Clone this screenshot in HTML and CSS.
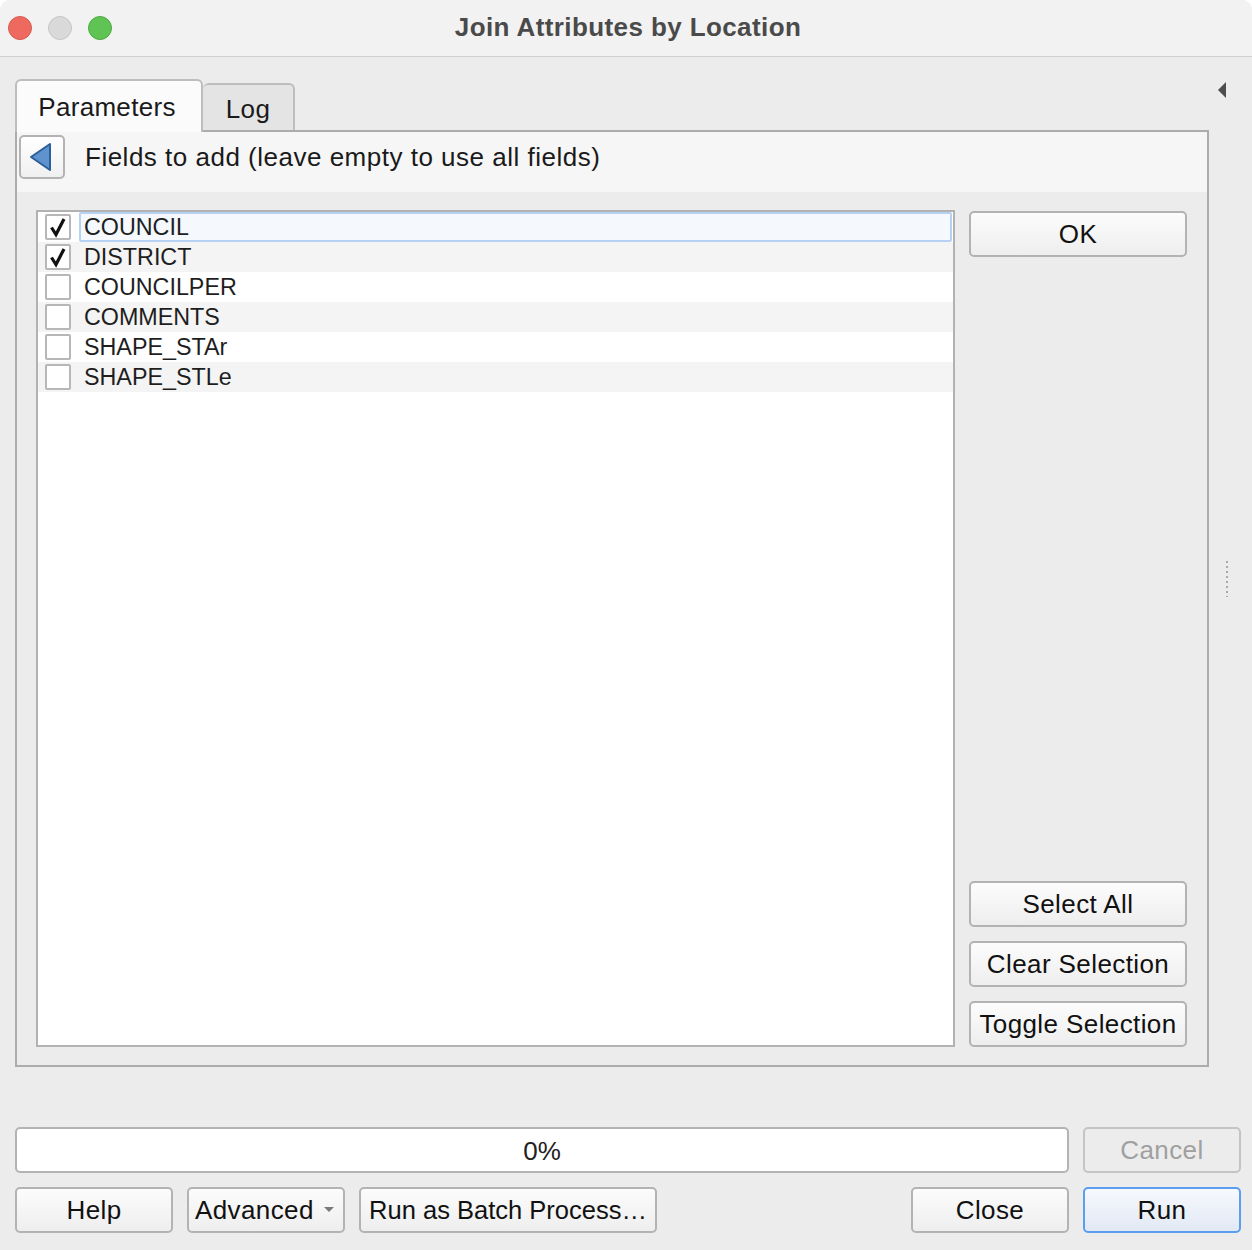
FILE: index.html
```html
<!DOCTYPE html>
<html>
<head>
<meta charset="utf-8">
<link rel="stylesheet" href="styles.css">
</head>
<body>
<div class="window">
  <div class="titlebar">
    <div class="lights">
      <span class="light red"></span>
      <span class="light gray"></span>
      <span class="light green"></span>
    </div>
    <div class="title">Join Attributes by Location</div>
    <div></div>
  </div>
  <div class="content">
    <div class="main">
      <div class="tabs-col">
        <div class="tabbar">
          <div class="tab active">Parameters</div>
          <div class="tab">Log</div>
        </div>
        <div class="panel">
          <div class="panel-head">
            <div class="back">
              <svg width="26" height="30" viewBox="0 0 26 30"><path d="M22 2 L22 28 L3 15 Z" fill="#5f93cf" stroke="#2d5f99" stroke-width="2" stroke-linejoin="round"/></svg>
            </div>
            <span class="head-text">Fields to add (leave empty to use all fields)</span>
          </div>
          <div class="panel-body">
            <div class="list">
              <div class="row">
                <span class="cb"><svg width="22" height="22" viewBox="0 0 22 22"><path d="M4.5 11.5 L9 18.5 L17 3" fill="none" stroke="#111" stroke-width="3.2" stroke-linejoin="miter"/></svg></span>
                <span class="label focus">COUNCIL</span>
              </div>
              <div class="row alt">
                <span class="cb"><svg width="22" height="22" viewBox="0 0 22 22"><path d="M4.5 11.5 L9 18.5 L17 3" fill="none" stroke="#111" stroke-width="3.2" stroke-linejoin="miter"/></svg></span>
                <span class="label">DISTRICT</span>
              </div>
              <div class="row">
                <span class="cb"></span>
                <span class="label">COUNCILPER</span>
              </div>
              <div class="row alt">
                <span class="cb"></span>
                <span class="label">COMMENTS</span>
              </div>
              <div class="row">
                <span class="cb"></span>
                <span class="label">SHAPE_STAr</span>
              </div>
              <div class="row alt">
                <span class="cb"></span>
                <span class="label">SHAPE_STLe</span>
              </div>
            </div>
            <div class="side-buttons">
              <div class="btn ok">OK</div>
              <div class="spacer"></div>
              <div class="btn">Select All</div>
              <div class="btn">Clear Selection</div>
              <div class="btn">Toggle Selection</div>
            </div>
          </div>
        </div>
      </div>
      <div class="sidebar">
        <svg class="collapse" width="10" height="18" viewBox="0 0 10 18"><path d="M9 1 L9 17 L1 9 Z" fill="#4d4d4d"/></svg>
        <div class="grip"></div>
      </div>
    </div>
    <div class="progress-row">
      <div class="progress">0%</div>
      <div class="btn disabled">Cancel</div>
    </div>
    <div class="button-row">
      <div class="btn">Help</div>
      <div class="btn advanced">Advanced <span class="caret"></span></div>
      <div class="btn batch">Run as Batch Process…</div>
      <div class="grow"></div>
      <div class="btn">Close</div>
      <div class="btn primary">Run</div>
    </div>
  </div>
</div>
</body>
</html>
```

FILE: styles.css
```css
html, body {
  margin: 0;
  padding: 0;
  background: #ffffff;
}
body {
  width: 1252px;
  height: 1250px;
  overflow: hidden;
  font-family: "Liberation Sans", Arial, sans-serif;
  color: #1c1c1c;
}
.window {
  width: 1252px;
  height: 1250px;
  background: #ececec;
  border-radius: 10px 10px 0 0;
  overflow: hidden;
  display: flex;
  flex-direction: column;
}
.titlebar {
  height: 56px;
  flex: none;
  background: #f2f2f2;
  border-bottom: 1px solid #d0d0d0;
  display: grid;
  grid-template-columns: 1fr auto 1fr;
  align-items: center;
}
.lights {
  display: flex;
  gap: 16px;
  padding-left: 8px;
  padding-top: 0;
}
.light {
  width: 22px;
  height: 22px;
  border-radius: 50%;
  border: 1px solid transparent;
}
.light.red { background: #ee6a5f; border-color: #d65b50; }
.light.gray { background: #d9d9d9; border-color: #c6c6c6; }
.light.green { background: #5fc454; border-color: #4faa44; }
.title {
  font-weight: bold;
  font-size: 26px;
  letter-spacing: 0.4px;
  color: #4a4a4a;
  padding-bottom: 1px;
  padding-left: 4px;
}
.content {
  flex: 1;
  display: flex;
  flex-direction: column;
}
.main {
  display: flex;
  padding-top: 22px;
}
.tabs-col {
  margin-left: 15px;
  width: 1194px;
  display: flex;
  flex-direction: column;
}
.tabbar {
  height: 51px;
  display: flex;
  align-items: flex-end;
}
.tab {
  box-sizing: border-box;
  font-size: 26px;
  letter-spacing: 0.3px;
  display: flex;
  align-items: center;
  justify-content: center;
  border: 2px solid #bdbdbd;
  border-bottom: none;
  border-radius: 6px 6px 0 0;
}
.tab.active {
  width: 188px;
  height: 53px;
  margin-bottom: -2px;
  background: #fbfbfb;
  position: relative;
  z-index: 1;
  color: #1a1a1a;
  padding-top: 2px;
  padding-right: 4px;
}
.tab:not(.active) {
  width: 92px;
  height: 47px;
  background: #e4e4e4;
  border-left: none;
  color: #1a1a1a;
  padding-top: 4px;
}
.panel {
  height: 937px;
  box-sizing: border-box;
  border: 2px solid #acacac;
  display: flex;
  flex-direction: column;
}
.panel-head {
  height: 60px;
  flex: none;
  background: #f6f6f6;
  display: flex;
  align-items: flex-start;
}
.back {
  box-sizing: border-box;
  width: 46px;
  height: 44px;
  margin: 3px 0 0 2px;
  border: 2px solid #b3b3b3;
  border-radius: 5px;
  background: linear-gradient(#ffffff, #f0f0f0);
  display: flex;
  align-items: center;
  justify-content: center;
  padding-right: 2px;
}
.head-text {
  font-size: 26px;
  letter-spacing: 0.5px;
  margin-left: 20px;
  margin-top: 10px;
  color: #1a1a1a;
}
.panel-body {
  flex: 1;
  display: flex;
  gap: 14px;
  padding: 18px 20px 18px 19px;
}
.list {
  box-sizing: border-box;
  width: 919px;
  height: 837px;
  border: 2px solid #b2b2b2;
  background: #ffffff;
}
.row {
  height: 30px;
  display: flex;
  align-items: center;
  padding-left: 7px;
}
.row.alt {
  background: #f4f4f4;
}
.cb {
  box-sizing: border-box;
  width: 26px;
  height: 26px;
  border: 2px solid #b7b7b7;
  border-radius: 2px;
  background: #ffffff;
  display: flex;
  align-items: center;
  justify-content: center;
  flex: none;
}
.label {
  box-sizing: border-box;
  flex: 1;
  height: 30px;
  margin-left: 8px;
  padding-left: 4px;
  font-size: 23.3px;
  line-height: 28px;
  color: #1e1e1e;
  border: 1px solid transparent;
  margin-right: 1px;
}
.label.focus {
  border: 2px solid #b6d1f1;
  border-radius: 2px;
  background: #f5f9fe;
  padding-left: 3px;
  line-height: 26px;
}
.side-buttons {
  width: 218px;
  display: flex;
  flex-direction: column;
  gap: 14px;
}
.spacer {
  flex: 1;
}
.btn {
  box-sizing: border-box;
  height: 46px;
  border: 2px solid #b3b3b3;
  border-radius: 5px;
  background: linear-gradient(#fcfcfc, #eeeeee);
  font-size: 26px;
  letter-spacing: 0.4px;
  color: #111111;
  display: flex;
  align-items: center;
  justify-content: center;
  flex: none;
  white-space: nowrap;
}
.btn.ok {
  margin-top: 1px;
}
.sidebar {
  width: 43px;
  display: flex;
  flex-direction: column;
}
.collapse {
  margin: 2px 0 0 8px;
}
.grip {
  margin: 462px 0 0 17px;
  width: 2px;
  height: 36px;
  background: repeating-linear-gradient(#a9a9a9 0 2px, transparent 2px 5px);
}
.progress-row {
  display: flex;
  gap: 14px;
  margin: 60px 0 0 15px;
}
.progress {
  box-sizing: border-box;
  width: 1054px;
  height: 46px;
  background: #ffffff;
  border: 2px solid #b3b3b3;
  border-radius: 5px;
  font-size: 26px;
  color: #222;
  display: flex;
  align-items: center;
  justify-content: center;
  padding-top: 2px;
}
.btn.disabled {
  width: 158px;
  color: #a0a0a0;
  border-color: #c4c4c4;
  background: #ececec;
}
.button-row {
  display: flex;
  gap: 14px;
  margin: 14px 0 0 15px;
  width: 1226px;
}
.button-row .btn {
  width: 158px;
}
.button-row .btn.batch {
  width: 298px;
  letter-spacing: 0;
  font-size: 25.5px;
}
.btn.advanced {
  justify-content: flex-start;
  padding-left: 6px;
}
.caret {
  width: 0;
  height: 0;
  border-left: 5px solid transparent;
  border-right: 5px solid transparent;
  border-top: 5px solid #7a7a7a;
  margin-left: 10px;
  margin-bottom: 2px;
}
.grow {
  flex: 1;
}
.btn.primary {
  border-color: #5b9eef;
  background: linear-gradient(#f6f9fd, #e2e9f4);
}
```
